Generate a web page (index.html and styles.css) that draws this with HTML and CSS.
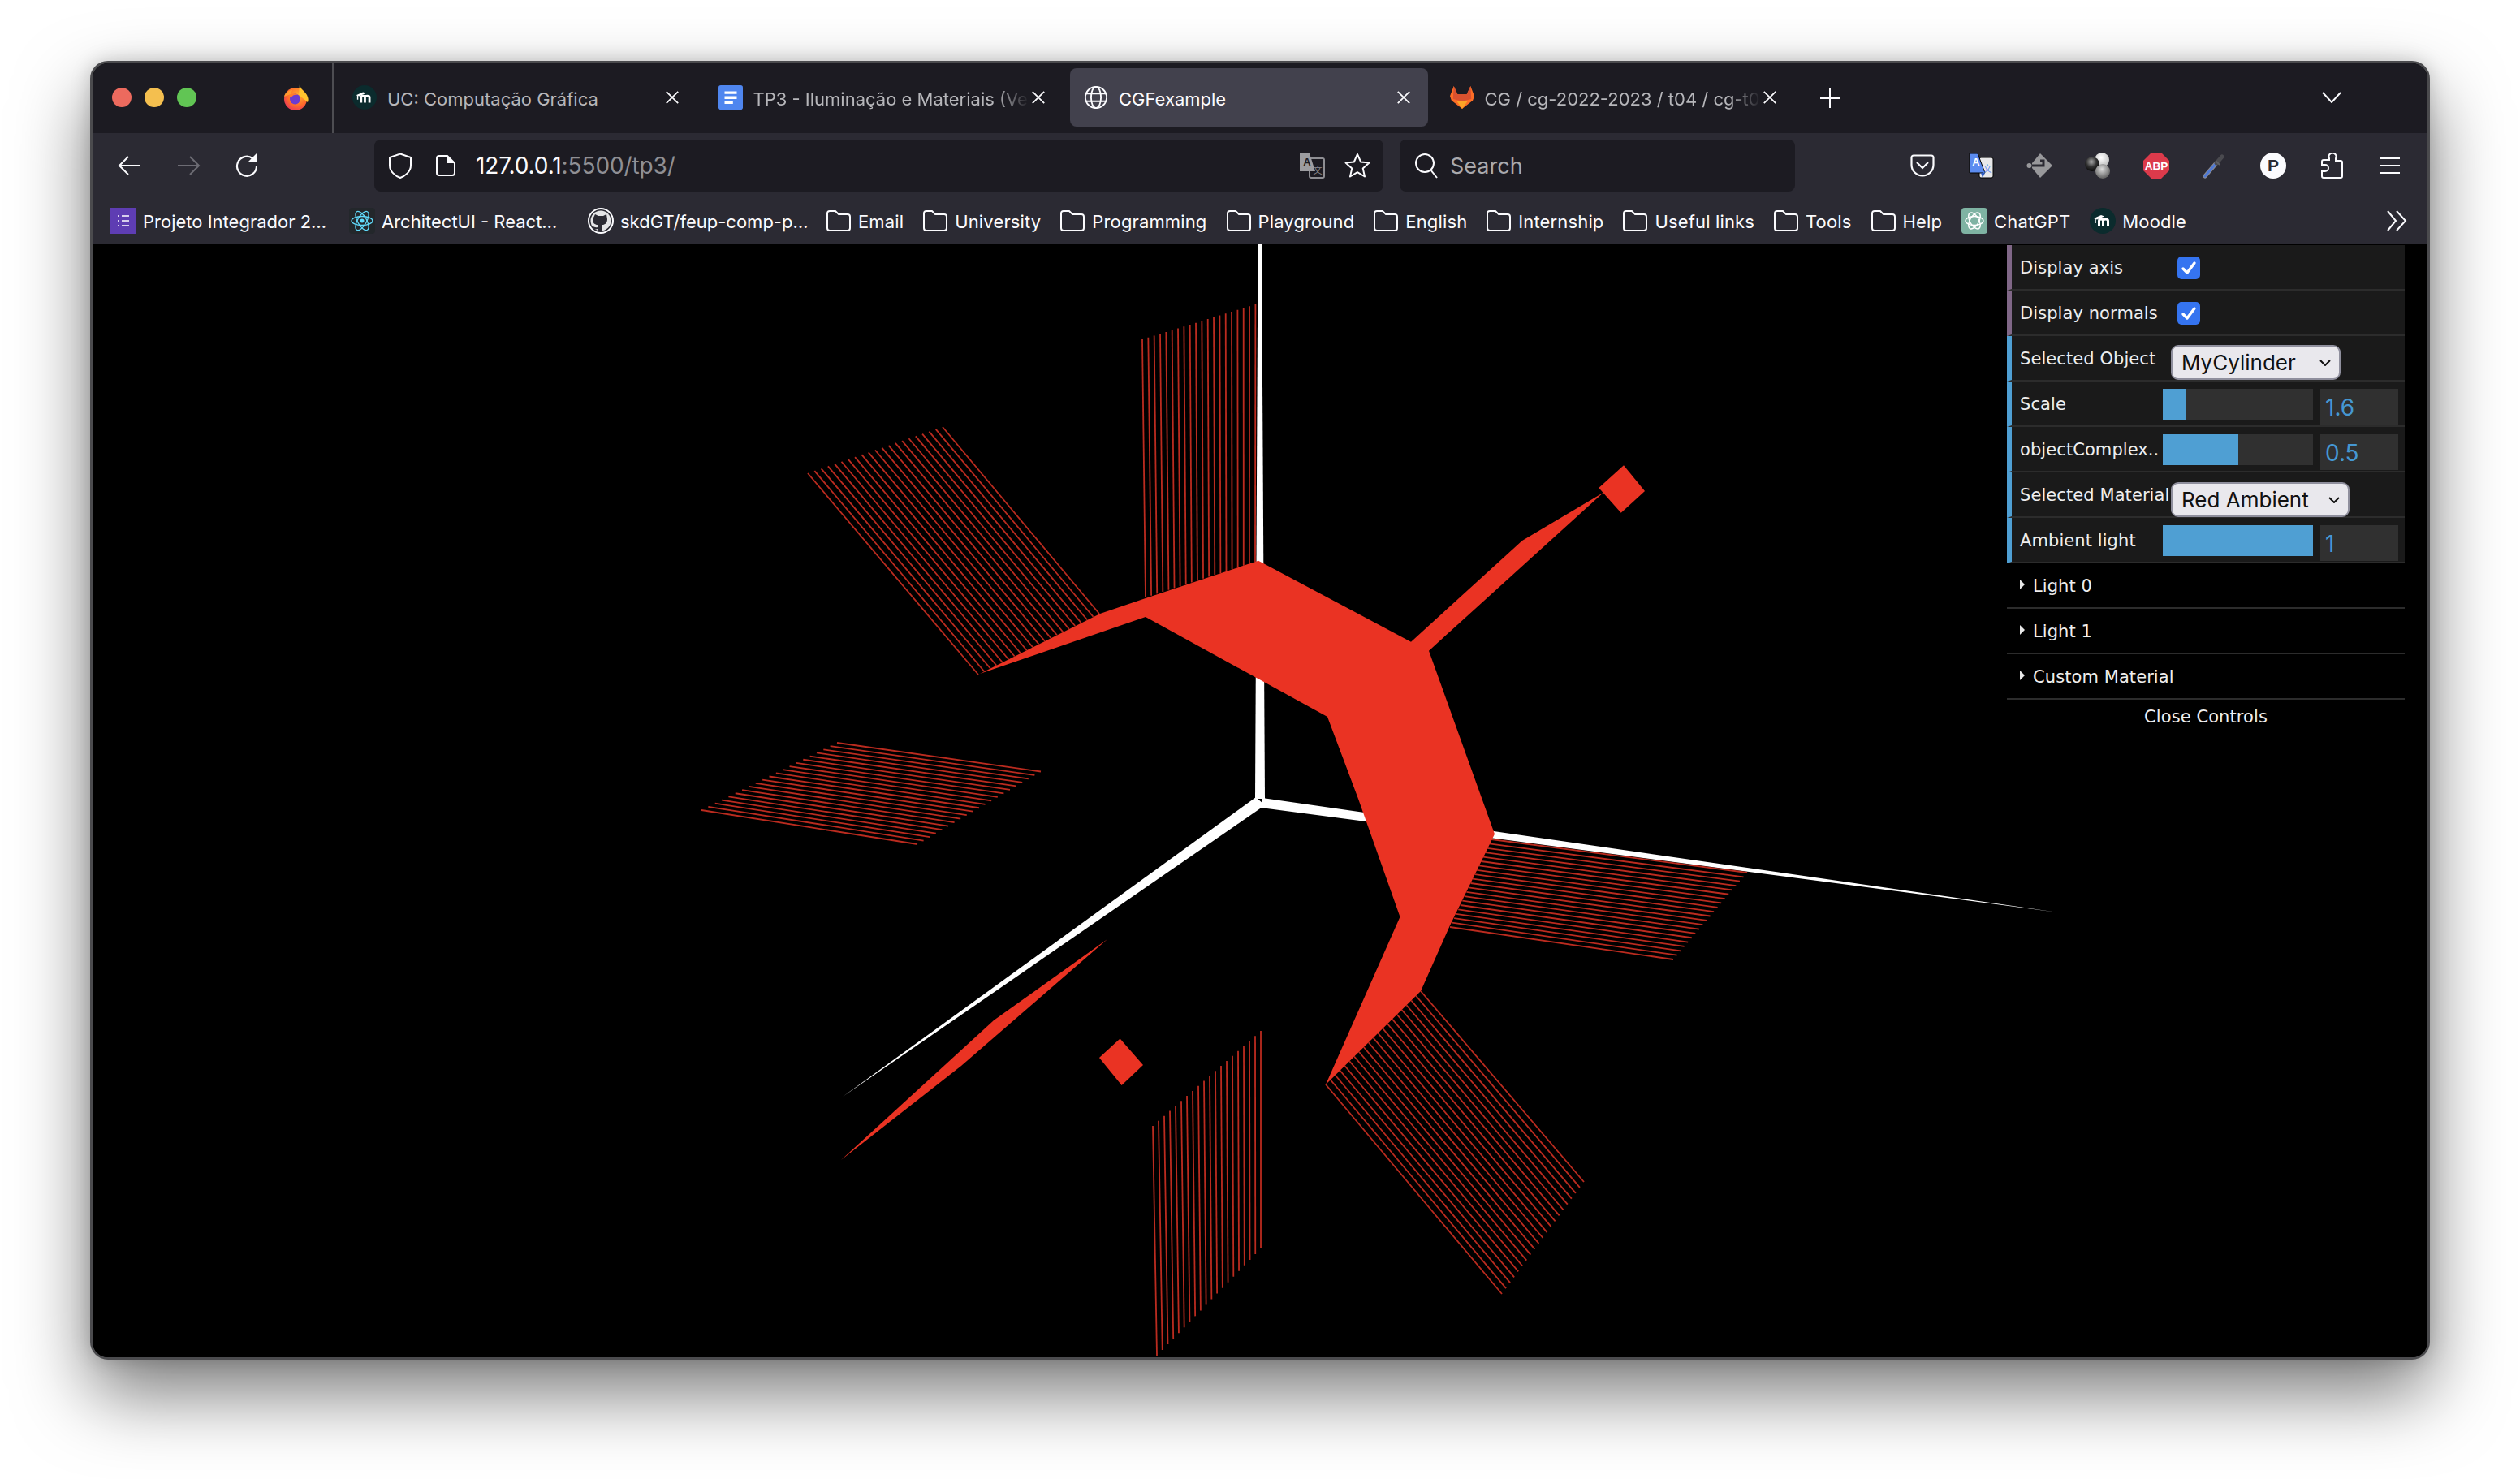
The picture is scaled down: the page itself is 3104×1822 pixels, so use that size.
FILE: index.html
```html
<!DOCTYPE html>
<html lang="en">
<head>
<meta charset="utf-8">
<title>CGFexample</title>
<link rel="stylesheet" href="styles.css">
</head>
<body>
<svg class="sprite" aria-hidden="true">
  <defs>
    <radialGradient id="ff" cx="0.6" cy="0.35" r="0.8"><stop offset="0" stop-color="#ffb52e"/><stop offset="0.55" stop-color="#ff6a2b"/><stop offset="1" stop-color="#e0246b"/></radialGradient>
    <radialGradient id="ballW" cx="0.45" cy="0.35" r="0.7"><stop offset="0" stop-color="#fff"/><stop offset="1" stop-color="#b9b9b9"/></radialGradient>
    <radialGradient id="ballK" cx="0.45" cy="0.35" r="0.7"><stop offset="0" stop-color="#aaa"/><stop offset="0.5" stop-color="#333"/><stop offset="1" stop-color="#000"/></radialGradient>
    <radialGradient id="ballG" cx="0.45" cy="0.35" r="0.7"><stop offset="0" stop-color="#ddd"/><stop offset="1" stop-color="#555"/></radialGradient>
  </defs>
  <symbol id="i-close" viewBox="0 0 20 20"><path d="M2 2l16 16M18 2L2 18" fill="none" stroke="currentColor" stroke-width="2"/></symbol>
  <symbol id="i-folder" viewBox="0 0 30 26"><path d="M4 1h7l4 4h11a3 3 0 0 1 3 3v14a3 3 0 0 1-3 3H4a3 3 0 0 1-3-3V4a3 3 0 0 1 3-3z" fill="none" stroke="#fbfbfe" stroke-width="2"/></symbol>
  <symbol id="i-moodle" viewBox="0 0 32 32"><circle cx="16" cy="16" r="16" fill="#0b2b2d"/><path d="M5 13l9-4 4 1.500-9 4z" fill="#fff"/><path d="M7 13v6" stroke="#fff" stroke-width="1.500"/><path d="M11.500 23v-7q0-2 2.500-2t2.500 2v7m0-7q0-2 3-2t3 2v7" fill="none" stroke="#fff" stroke-width="3"/></symbol>
</svg>

<div class="window">
  <header class="tabbar">
    <div class="lights"><span class="light red"></span><span class="light yellow"></span><span class="light green"></span></div>
    <svg class="firefox" viewBox="0 0 32 32"><circle cx="16" cy="18" r="14" fill="url(#ff)"/><path d="M21 0c1 6 6 8 9 13 2 4 2 6 1 9l-11-9z" fill="#ffc42e"/><path d="M2 15c1-5 6-8 10-8l-2 5z" fill="#ff9a2e"/><circle cx="15.500" cy="18" r="6.500" fill="#6b3bd0"/><path d="M9 14c3-4 8-3 10-1-3-1-7 0-8 3z" fill="#ff7a2e"/></svg>
    <span class="tab-sep"></span>
    <nav class="tabs">
      <div class="tab">
        <svg class="favicon"><use href="#i-moodle"/></svg>
        <span class="tab-title">UC: Computação Gráfica</span>
        <svg class="tab-close"><use href="#i-close"/></svg>
      </div>
      <div class="tab">
        <svg class="favicon" viewBox="0 0 32 32"><rect width="32" height="32" rx="3" fill="#4f86ef"/><path d="M8 8h16v3.500H8zM8 14.500h16V18H8zM8 21h11v3.500H8z" fill="#fff"/></svg>
        <span class="tab-title fade">TP3 - Iluminação e Materiais (Ve</span>
        <svg class="tab-close"><use href="#i-close"/></svg>
      </div>
      <div class="tab active">
        <svg class="favicon" viewBox="0 0 32 32"><g fill="none" stroke="#fbfbfe" stroke-width="2"><circle cx="16" cy="16" r="14"/><ellipse cx="16" cy="16" rx="6.500" ry="14"/><path d="M3 11h26M3 21h26"/></g></svg>
        <span class="tab-title">CGFexample</span>
        <svg class="tab-close"><use href="#i-close"/></svg>
      </div>
      <div class="tab">
        <svg class="favicon" viewBox="0 0 32 32"><path d="M16 31L2 20 0 14 5 1l5 11h12l5-11 5 13-2 6z" fill="#fc6d26"/><path d="M5 1l5 11h12l5-11 1 17-12 3-12-3z" fill="#d9512f"/><path d="M16 31l-7-10h14z" fill="#fca326"/></svg>
        <span class="tab-title fade">CG / cg-2022-2023 / t04 / cg-t0</span>
        <svg class="tab-close"><use href="#i-close"/></svg>
      </div>
    </nav>
    <svg class="newtab" viewBox="0 0 26 26"><path d="M13 1v24M1 13h24" stroke="#fbfbfe" stroke-width="2"/></svg>
    <svg class="tablist" viewBox="0 0 24 14"><path d="M1 1l11 12L23 1" fill="none" stroke="#fbfbfe" stroke-width="2"/></svg>
  </header>

  <div class="toolbar">
    <div class="tb-btn"><svg class="ic30" viewBox="0 0 30 30"><path d="M28 15H2M13 4L2 15l11 11" fill="none" stroke="#fbfbfe" stroke-width="2"/></svg></div>
    <div class="tb-btn"><svg class="ic30" viewBox="0 0 30 30"><path d="M2 15h26M17 4l11 11-11 11" fill="none" stroke="#6d6c74" stroke-width="2"/></svg></div>
    <div class="tb-btn"><svg class="ic30" viewBox="0 0 30 30"><path d="M22 6A12 12 0 1 0 27 16" fill="none" stroke="#fbfbfe" stroke-width="2.200"/><path d="M17 10h10V0z" fill="#fbfbfe"/></svg></div>
    <div class="urlbar">
      <svg class="shield" viewBox="0 0 30 32"><path d="M15 1.500L28 6v10c0 7-7 13-13 15C9 29 2 23 2 16V6z" fill="none" stroke="#fbfbfe" stroke-width="2"/></svg>
      <svg class="page" viewBox="0 0 24 26"><path d="M4 1h10l9 9v12a3 3 0 0 1-3 3H4a3 3 0 0 1-3-3V4a3 3 0 0 1 3-3z" fill="none" stroke="#fbfbfe" stroke-width="2"/><path d="M14 1l9 9h-9z" fill="#fbfbfe"/></svg>
      <span class="url"><b>127.0.0.1</b>:5500/tp3/</span>
      <svg class="url-translate" viewBox="0 0 32 32"><rect x="13" y="7" width="18" height="24" rx="2" fill="#1c1b22" stroke="#8e8e93" stroke-width="2"/><path d="M1 1h12l7 22H1z" fill="#9c9ca0"/><text class="glyph-a" x="10" y="16" text-anchor="middle">A</text><text class="glyph-b" x="23" y="26" text-anchor="middle">文</text></svg>
      <svg class="star" viewBox="0 0 32 32"><path d="M16 2l4.200 9.500 10.300 1-7.800 6.900 2.300 10.100-9-5.300-9 5.300 2.300-10.100-7.800-6.900 10.300-1z" fill="none" stroke="#fbfbfe" stroke-width="2" stroke-linejoin="round"/></svg>
    </div>
    <div class="searchbar">
      <svg class="lens" viewBox="0 0 30 32"><circle cx="13" cy="13" r="11" fill="none" stroke="#fbfbfe" stroke-width="2"/><path d="M20 21l8 10" stroke="#fbfbfe" stroke-width="2"/></svg>
      <span class="search-text">Search</span>
    </div>
    <div class="tb-btn"><svg class="ic28" viewBox="0 0 30 28"><path d="M4 1.500h22a2.500 2.500 0 0 1 2.500 2.500v9a13.500 13.500 0 0 1-27 0V4A2.500 2.500 0 0 1 4 1.500z" fill="none" stroke="#fbfbfe" stroke-width="2.200"/><path d="M8 10l7 7 7-7" fill="none" stroke="#fbfbfe" stroke-width="2.200"/></svg></div>
    <div class="tb-btn"><svg class="ic32" viewBox="0 0 32 32"><rect x="14" y="6" width="17" height="25" rx="2" fill="#e8e8ea" stroke="#000" stroke-width="1"/><path d="M2 1h10l9 24H2z" fill="#5b8bf0" stroke="#000" stroke-width="1"/><path d="M16 25l5 0-3 6z" fill="#2f5cc0"/><text class="glyph-a white" x="10" y="16" text-anchor="middle">A</text><text class="glyph-b blue" x="24" y="24" text-anchor="middle">文</text></svg></div>
    <div class="tb-btn"><svg class="ic32" viewBox="0 0 32 32"><path d="M17 1l15 15-15 15-10-12v-6z" fill="#98989b"/><path d="M6 16h15v-6h-4" fill="none" stroke="#2b2a33" stroke-width="3"/><circle cx="3.500" cy="16" r="3" fill="#98989b"/></svg></div>
    <div class="tb-btn"><svg class="ic32" viewBox="0 0 32 32"><circle cx="21" cy="9" r="9" fill="url(#ballW)"/><circle cx="9" cy="14" r="9" fill="url(#ballK)"/><circle cx="22" cy="23" r="9" fill="url(#ballG)"/></svg></div>
    <div class="tb-btn"><svg class="ic32" viewBox="0 0 32 32"><path d="M10 0h12l10 10v12L22 32H10L0 22V10z" fill="#dc3a4b"/><text class="abp" x="16" y="21" text-anchor="middle">ABP</text></svg></div>
    <div class="tb-btn"><svg class="ic32" viewBox="0 0 32 32"><path d="M4 29L17 14" stroke="#8a8a90" stroke-width="5" stroke-linecap="round"/><path d="M4 29L17 14" stroke="#4f78d4" stroke-width="3" stroke-linecap="round"/><path d="M18 13l7-8" stroke="#4a4a4f" stroke-width="5" stroke-linecap="round"/><path d="M17 10l5 5" stroke="#5f5f64" stroke-width="2"/></svg></div>
    <div class="tb-btn"><svg class="ic32" viewBox="0 0 32 32"><circle cx="16" cy="16" r="16" fill="#fbfbfe"/><text class="pfont" x="16" y="23" text-anchor="middle">P</text></svg></div>
    <div class="tb-btn"><svg class="ic28 tall" viewBox="0 0 28 32"><path d="M11 7a4.500 4.500 0 1 1 8 0v3h6a2 2 0 0 1 2 2v17a2 2 0 0 1-2 2H4a2 2 0 0 1-2-2v-6h4a3.500 3.500 0 0 0 0-8H2v-4a2 2 0 0 1 2-2h7z" fill="none" stroke="#fbfbfe" stroke-width="2"/></svg></div>
    <div class="tb-btn"><svg class="ic26" viewBox="0 0 26 22"><path d="M1 2h24M1 11h24M1 20h24" stroke="#fbfbfe" stroke-width="2"/></svg></div>
  </div>

  <div class="bookmarks">
    <div class="bm trunc"><svg class="bm-ic" viewBox="0 0 32 32"><rect width="32" height="32" fill="#5e3db3"/><path d="M14 10h9M14 16h9M14 22h9M9 10h2M9 16h2M9 22h2" stroke="#fff" stroke-width="1.500"/></svg><span>Projeto Integrador 2…</span></div>
    <div class="bm trunc"><svg class="bm-ic" viewBox="0 0 32 32"><rect width="32" height="32" rx="4" fill="#23272b"/><g fill="none" stroke="#61dafb" stroke-width="1.300"><ellipse cx="16" cy="16" rx="13" ry="5.500"/><ellipse cx="16" cy="16" rx="13" ry="5.500" transform="rotate(60 16 16)"/><ellipse cx="16" cy="16" rx="13" ry="5.500" transform="rotate(120 16 16)"/></g><circle cx="16" cy="16" r="2.500" fill="#61dafb"/></svg><span>ArchitectUI - React…</span></div>
    <div class="bm trunc"><svg class="bm-ic" viewBox="0 0 32 32"><circle cx="16" cy="16" r="15" fill="#2b2a33" stroke="#fbfbfe" stroke-width="2"/><circle cx="16" cy="16" r="12.500" fill="#e4e4e6"/><path d="M9 8l4 2h6l4-2 1 6c0 5-3 7-6 7v8h-6v-3c-3 1-5 0-6-3 2 0 3 2 6 1v-3c-3 0-6-2-6-7z" fill="#2b2a33"/></svg><span>skdGT/feup-comp-p…</span></div>
    <div class="bm folder"><svg class="bm-folder"><use href="#i-folder"/></svg><span>Email</span></div>
    <div class="bm folder"><svg class="bm-folder"><use href="#i-folder"/></svg><span>University</span></div>
    <div class="bm folder"><svg class="bm-folder"><use href="#i-folder"/></svg><span>Programming</span></div>
    <div class="bm folder"><svg class="bm-folder"><use href="#i-folder"/></svg><span>Playground</span></div>
    <div class="bm folder"><svg class="bm-folder"><use href="#i-folder"/></svg><span>English</span></div>
    <div class="bm folder"><svg class="bm-folder"><use href="#i-folder"/></svg><span>Internship</span></div>
    <div class="bm folder"><svg class="bm-folder"><use href="#i-folder"/></svg><span>Useful links</span></div>
    <div class="bm folder"><svg class="bm-folder"><use href="#i-folder"/></svg><span>Tools</span></div>
    <div class="bm folder"><svg class="bm-folder"><use href="#i-folder"/></svg><span>Help</span></div>
    <div class="bm"><svg class="bm-ic" viewBox="0 0 32 32"><rect width="32" height="32" rx="4" fill="#7fb3a3"/><g fill="none" stroke="#fff" stroke-width="1.400"><ellipse cx="16" cy="16" rx="11" ry="5.500"/><ellipse cx="16" cy="16" rx="11" ry="5.500" transform="rotate(60 16 16)"/><ellipse cx="16" cy="16" rx="11" ry="5.500" transform="rotate(120 16 16)"/></g></svg><span>ChatGPT</span></div>
    <div class="bm"><svg class="bm-ic"><use href="#i-moodle"/></svg><span>Moodle</span></div>
    <svg class="more" viewBox="0 0 26 26"><path d="M2 1l10 12L2 25M13 1l11 12-11 12" fill="none" stroke="#fbfbfe" stroke-width="2"/></svg>
  </div>

  <main class="stage">
    <svg class="scene" id="scene" viewBox="114 300 2876 1372" preserveAspectRatio="none">
      <g fill="#fff">
        <polygon points="1549.500,300 1554,300 1558,984 1546,984"/>
        <polygon points="1555,983 2535,1124 1553,995"/>
        <polygon points="1547,982 1558,992 1038,1351"/>
      </g>
      <g id="normals" fill="none" stroke="#bb2b1f" stroke-width="1.800"></g>
      <g fill="#ea3323">
        <polygon points="1550,690.700 1738,790.700 1875,666 1975,606.700 1760,801.700 1841,1027.500 1786,1140 1750,1221 1633,1336 1724.500,1129.600 1673,984 1635,883 1411,760 1207,830 1355,756 1414,736"/>
        <polygon points="2000,573.300 2026,605 1996.700,631.700 1969.300,601"/>
        <polygon points="1364,1157 1224,1257 1036,1429 1184,1313"/>
        <polygon points="1379.600,1279.600 1408,1312 1381.600,1337 1354,1303"/>
      </g>
    </svg>

    <aside class="gui">
      <div class="row bool"><span class="label">Display axis</span><div class="check"><svg viewBox="0 0 28 28"><path d="M7 15l5 5 9-12" fill="none" stroke="#fff" stroke-width="3.400" stroke-linecap="round" stroke-linejoin="round"/></svg></div></div>
      <div class="row bool"><span class="label">Display normals</span><div class="check"><svg viewBox="0 0 28 28"><path d="M7 15l5 5 9-12" fill="none" stroke="#fff" stroke-width="3.400" stroke-linecap="round" stroke-linejoin="round"/></svg></div></div>
      <div class="row"><span class="label up">Selected Object</span><div class="select sel-object"><span>MyCylinder</span><svg viewBox="0 0 14 8"><path d="M1 1l6 6 6-6" fill="none" stroke="#111" stroke-width="2"/></svg></div></div>
      <div class="row"><span class="label">Scale</span><div class="slider"><div class="fill" style="width:15%"></div></div><div class="number">1.6</div></div>
      <div class="row"><span class="label">objectComplex..</span><div class="slider"><div class="fill" style="width:50%"></div></div><div class="number">0.5</div></div>
      <div class="row"><span class="label up">Selected Material</span><div class="select sel-material"><span>Red Ambient</span><svg viewBox="0 0 14 8"><path d="M1 1l6 6 6-6" fill="none" stroke="#111" stroke-width="2"/></svg></div></div>
      <div class="row"><span class="label">Ambient light</span><div class="slider"><div class="fill" style="width:100%"></div></div><div class="number">1</div></div>
      <div class="fold">Light 0</div>
      <div class="fold">Light 1</div>
      <div class="fold">Custom Material</div>
      <div class="close-btn">Close Controls</div>
    </aside>
  </main>
</div>
<script src="app.js"></script>
</body>
</html>
```
FILE: styles.css
```css
* { box-sizing: border-box; }
html, body { margin: 0; height: 100%; background: #fff; overflow: hidden; }
body { font-family: Inter, "Noto Sans", sans-serif; color: #fbfbfe; padding: 75px 111px 0; }
.sprite { position: absolute; width: 0; height: 0; }
svg { display: block; flex: none; }

.window {
  width: 2882px; height: 1600px; display: flex; flex-direction: column;
  border: 3px solid #4b4b4e; border-radius: 22px; overflow: hidden; background: #000;
  box-shadow: 0 42px 90px rgba(0,0,0,.52), 0 0 24px rgba(0,0,0,.18);
}

/* tab strip */
.tabbar { height: 86px; flex: none; background: #1c1b22; display: flex; align-items: center; padding-bottom: 2px; }
.lights { display: flex; gap: 16px; margin-left: 24px; }
.light { width: 24px; height: 24px; border-radius: 50%; }
.red { background: #ec6a5e; }
.yellow { background: #f4bf4f; }
.green { background: #61c554; }
.firefox { width: 32px; height: 32px; margin-left: 106px; }
.tab-sep { width: 2px; height: 86px; background: #4d4d52; margin: 0 0 -2px 29px; align-self: flex-start; }
.tabs { display: flex; gap: 9.500px; margin-left: 6px; }
.tab { width: 441px; height: 72px; border-radius: 8px; display: flex; align-items: center; padding: 0 21px 0 17px; color: #b6b6ba; font-size: 22px; }
.tab.active { background: #42414d; color: #fbfbfe; }
.favicon { width: 30px; height: 32px; }
.tab-title { margin-left: 13px; width: 340px; flex: none; padding-top: 4px; white-space: nowrap; }
.tab-title.fade { -webkit-mask-image: linear-gradient(90deg, #000 88%, transparent); mask-image: linear-gradient(90deg, #000 88%, transparent); }
.tab-close { width: 18px; height: 18px; margin-left: auto; color: #fbfbfe; }
.newtab { width: 26px; height: 26px; margin: 2px 0 0 31px; }
.tablist { width: 24px; height: 14px; margin-left: auto; margin-right: 106px; }

/* navigation toolbar */
.toolbar { height: 80px; flex: none; background: #2b2a33; display: flex; align-items: center; padding: 0 10px; }
.tb-btn { width: 72px; height: 64px; display: flex; align-items: center; justify-content: center; }
.ic30 { width: 30px; height: 30px; }
.ic32 { width: 32px; height: 32px; }
.ic28 { width: 30px; height: 28px; }
.ic28.tall { width: 28px; height: 32px; }
.ic26 { width: 26px; height: 22px; }
.urlbar { flex: 1; height: 64px; margin: 0 20px 0 121px; background: #1c1b22; border-radius: 8px; display: flex; align-items: center; padding: 0 16px 0 17px; }
.shield { width: 30px; height: 32px; }
.page { width: 24px; height: 26px; margin-left: 29px; }
.url { margin-left: 25px; font-size: 28px; color: #8f8f94; letter-spacing: -.1px; }
.url b { color: #fbfbfe; font-weight: 400; }
.url-translate { width: 32px; height: 32px; margin-left: auto; }
.star { width: 32px; height: 32px; margin-left: 24px; }
.glyph-a { font: 700 13px "Liberation Sans", sans-serif; fill: #1c1b22; }
.glyph-a.white { fill: #fff; }
.glyph-b { font: 11px "Noto Sans CJK SC", sans-serif; fill: #8e8e93; }
.glyph-b.blue { fill: #5b8bf0; }
.abp { font: 700 13.500px "Liberation Sans", sans-serif; fill: #fff; }
.pfont { font: 700 21px "Liberation Sans", sans-serif; fill: #2b2a33; }
.searchbar { width: 487px; height: 64px; margin-right: 121px; background: #1c1b22; border-radius: 8px; display: flex; align-items: center; padding-left: 18px; flex: none; }
.lens { width: 30px; height: 32px; }
.search-text { margin-left: 14px; font-size: 27px; color: #a9a9ad; }

/* bookmarks */
.bookmarks { height: 56px; flex: none; background: #2b2a33; display: flex; align-items: center; gap: 24px; padding: 0 25px 0 22px; font-size: 22px; }
.bm { display: flex; align-items: center; white-space: nowrap; }
.bm span { padding-top: 2px; }
.bm-ic { width: 32px; height: 32px; margin-right: 8px; }
.bm.trunc { width: 270px; }
.bm.folder span, .bm:not(.trunc) span { letter-spacing: .14px; }
.bm-folder { width: 30px; height: 26px; margin-right: 9px; }
.more { width: 26px; height: 26px; margin-left: auto; }

/* canvas */
.stage { flex: 1; position: relative; background: #000; overflow: hidden; }
.scene { width: 100%; height: 100%; }

/* controls panel */
.gui { position: absolute; top: 2px; right: 28px; width: 490px; font: 21px "DejaVu Sans", sans-serif; letter-spacing: .08px; color: #eee; }
.row { height: 56px; background: #1a1a1a; border-left: 6px solid #4f9fd3; border-bottom: 2px solid #2c2c2c; display: flex; align-items: flex-start; padding-left: 10px; }
.row.bool { border-left-color: #806787; }
.label { width: 176px; line-height: 56px; white-space: nowrap; flex: none; }
.label.up { line-height: 57px; }
.check { width: 28px; height: 28px; margin: 14px 0 0 18px; background: #3574f0; border-radius: 5px; }
.select { height: 43px; margin: 11px 0 0 10px; background: #e9e8ed; border: 2px solid #8f8f9d; border-radius: 9px; color: #111; font: 26px Inter, sans-serif; letter-spacing: 0; display: flex; align-items: center; padding: 0 10px 0 11px; justify-content: space-between; }
.select svg { width: 14px; height: 8px; }
.sel-object { width: 209px; }
.sel-material { width: 220px; margin-top: 12px; }
.slider { width: 185px; height: 38px; margin-top: 9px; background: #303030; }
.fill { height: 100%; background: #4f9fd3; }
.number { width: 96px; height: 44px; margin: 9px 0 0 9px; background: #303030; color: #4597d2; font: 28px Inter, sans-serif; letter-spacing: 0; line-height: 46px; padding-left: 6px; }
.fold { height: 56px; border-bottom: 2px solid #2c2c2c; line-height: 56px; padding-left: 32px; position: relative; color: #eee; }
.fold::before { content: ""; position: absolute; left: 16px; top: 20px; border-style: solid; border-width: 6px 0 6px 6px; border-color: transparent transparent transparent #e8e8e8; }
.close-btn { height: 42px; line-height: 42px; text-align: center; color: #eee; }
```
FILE: app.js
```js
// Normal vectors of the cylinder: each group is a fan of parallel lines between two edges.
var groups = [
  { a: [1407, 418], b: [1546.4, 375], c: [1411, 736], d: [1546, 692], n: 20 },
  { a: [995, 583], b: [1161, 526], c: [1205, 831], d: [1354, 756], n: 21 },
  { a: [864, 998], b: [1031, 915], c: [1130, 1040], d: [1282, 950.5], n: 21 },
  { a: [1837, 1034], b: [1786, 1142], c: [2152, 1075], d: [2061, 1182], n: 21 },
  { a: [1750, 1221], b: [1633, 1336], c: [1951, 1456], d: [1850, 1594], n: 21 },
  { a: [1420, 1387], b: [1553, 1270], c: [1425, 1670], d: [1553, 1538], n: 20 }
];
var host = document.getElementById('normals');
groups.forEach(function (g) {
  for (var i = 0; i < g.n; i++) {
    var t = i / (g.n - 1);
    var line = document.createElementNS('http://www.w3.org/2000/svg', 'line');
    line.setAttribute('x1', g.a[0] + (g.b[0] - g.a[0]) * t);
    line.setAttribute('y1', g.a[1] + (g.b[1] - g.a[1]) * t);
    line.setAttribute('x2', g.c[0] + (g.d[0] - g.c[0]) * t);
    line.setAttribute('y2', g.c[1] + (g.d[1] - g.c[1]) * t);
    host.appendChild(line);
  }
});
```
